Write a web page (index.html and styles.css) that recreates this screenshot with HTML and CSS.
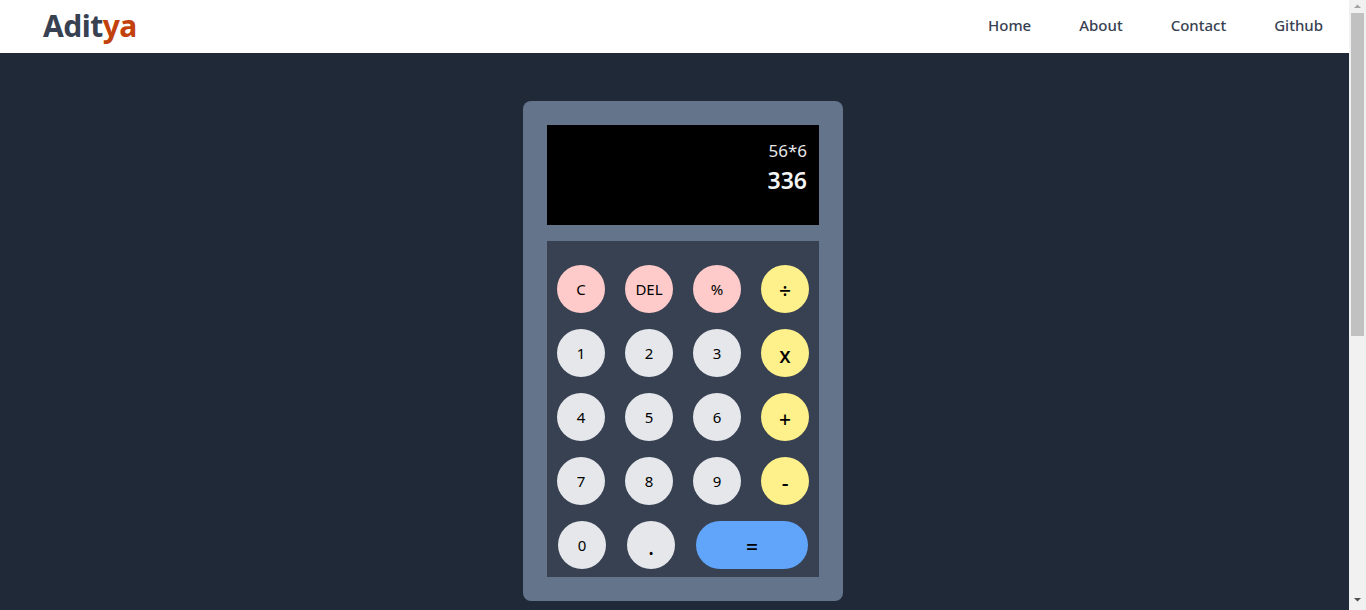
FILE: index.html
```html
<!DOCTYPE html>
<html>
<head>
<meta charset="utf-8">
<link rel="stylesheet" href="styles.css">
</head>
<body>
<nav class="nav">
  <div class="logo">Adit<span class="logo-accent">ya</span></div>
  <ul class="links">
    <li>Home</li>
    <li>About</li>
    <li>Contact</li>
    <li>Github</li>
  </ul>
</nav>
<main class="main">
  <div class="calc">
    <div class="display">
      <div class="expr">56*6</div>
      <div class="result">336</div>
    </div>
    <div class="keypad">
      <div class="row">
        <button class="key pink">C</button>
        <button class="key pink">DEL</button>
        <button class="key pink">%</button>
        <button class="key yellow op">÷</button>
      </div>
      <div class="row">
        <button class="key gray">1</button>
        <button class="key gray">2</button>
        <button class="key gray">3</button>
        <button class="key yellow op">x</button>
      </div>
      <div class="row">
        <button class="key gray">4</button>
        <button class="key gray">5</button>
        <button class="key gray">6</button>
        <button class="key yellow op">+</button>
      </div>
      <div class="row">
        <button class="key gray">7</button>
        <button class="key gray">8</button>
        <button class="key gray">9</button>
        <button class="key yellow op">-</button>
      </div>
      <div class="row last">
        <button class="key gray">0</button>
        <button class="key gray op">.</button>
        <button class="key blue op wide">=</button>
      </div>
    </div>
  </div>
</main>
<aside class="scrollbar">
  <svg class="sb-arrow" width="17" height="13" viewBox="0 0 17 13"><path d="M5 8 L8.5 4.5 L12 8 Z" fill="#a3a3a3"/></svg>
  <div class="sb-thumb"></div>
  <div class="sb-track"></div>
  <svg class="sb-arrow" width="17" height="14" viewBox="0 0 17 14"><path d="M5 2 L12 2 L8.5 5.5 Z" fill="#505050"/></svg>
</aside>
</body>
</html>
```
FILE: styles.css
```css
html { overflow-x: hidden; }
body {
  margin: 0 17px 0 0;
  font-family: "Noto Sans", "Open Sans", sans-serif;
  background: #1f2937;
}
.scrollbar {
  position: fixed;
  top: 0;
  right: 0;
  width: 17px;
  height: 100vh;
  background: #f1f1f1;
  display: flex;
  flex-direction: column;
}
.sb-arrow { display: block; flex: none; }
.sb-thumb {
  flex: none;
  height: 323px;
  margin: 0 2px;
  background: #c1c1c1;
}
.sb-track { flex: 1; }
.nav {
  height: 53px;
  background: #ffffff;
  display: flex;
  align-items: center;
  justify-content: space-between;
  padding: 0 2px 0 43px;
  box-sizing: border-box;
}
.logo {
  font-size: 30px;
  font-weight: 700;
  color: #374151;
  letter-spacing: -0.5px;
  margin-top: -2px;
}
.logo-accent { color: #c2410c; }
.links {
  list-style: none;
  display: flex;
  margin: 0;
  padding: 0;
}
.links li {
  font-size: 15px;
  font-weight: 500;
  color: #374151;
  padding: 0 24px;
  margin-top: -4px;
}
.main {
  width: 100vw;
  height: 1050px;
  display: flex;
  justify-content: center;
  align-items: flex-start;
  padding-top: 48px;
  box-sizing: border-box;
}
.calc {
  width: 320px;
  height: 500px;
  background: #64748b;
  border-radius: 8px;
  padding: 24px;
  box-sizing: border-box;
}
.display {
  height: 100px;
  background: #000;
  display: flex;
  flex-direction: column;
  align-items: flex-end;
  padding: 14px 12px 0 0;
  box-sizing: border-box;
}
.expr {
  font-size: 17px;
  color: #e5e7eb;
  line-height: 24px;
}
.result {
  font-size: 23px;
  font-weight: 600;
  color: #f3f4f6;
  line-height: 34px;
}
.keypad {
  margin-top: 16px;
  height: 336px;
  background: #374151;
  padding: 24px 10px 8px;
  box-sizing: border-box;
  display: flex;
  flex-direction: column;
  gap: 16px;
}
.row {
  display: flex;
  gap: 20px;
}
.row.last {
  padding-left: 1px;
  gap: 21px;
}
.key {
  width: 48px;
  height: 48px;
  border-radius: 24px;
  border: none;
  padding: 0;
  font-family: "Noto Sans", "Open Sans", sans-serif;
  font-size: 15px;
  color: #000;
  display: flex;
  align-items: center;
  justify-content: center;
}
.key.op {
  font-size: 21px;
  font-weight: 500;
  padding-top: 4px;
}
.key.wide { width: 112px; }
.pink { background: #fecaca; }
.yellow { background: #fef08a; }
.gray { background: #e5e7eb; }
.blue { background: #60a5fa; }
```
